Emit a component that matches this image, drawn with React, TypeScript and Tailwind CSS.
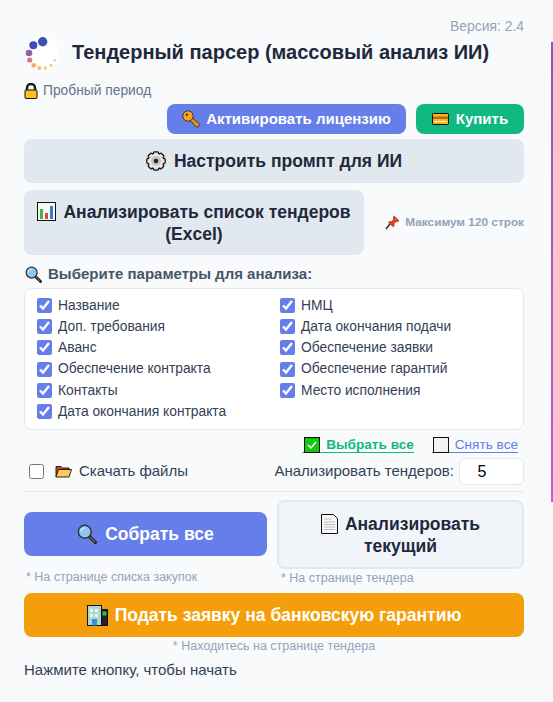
const leftParams = ['Название', 'Доп. требования', 'Аванс', 'Обеспечение контракта', 'Контакты', 'Дата окончания контракта']
const rightParams = ['НМЦ', 'Дата окончания подачи', 'Обеспечение заявки', 'Обеспечение гарантий', 'Место исполнения']

function Logo() {
  const dots = [
    [42.7, 11.7, 4.7, '#3d4fb5'],
    [33.3, 15.3, 4, '#3d4fb5'],
    [29, 23, 3.3, '#8b62b0'],
    [29.7, 30, 2.6, '#e8708a'],
    [33.7, 35.3, 2.4, '#fba66f'],
    [39.3, 38, 2, '#fdbb6e'],
    [45.3, 38, 1.8, '#fdc47a'],
    [51, 35.3, 1.5, '#fdc47a'],
    [54.7, 30.3, 1.3, '#fdc47a'],
  ] as const
  return (
    <svg width="34" height="34" viewBox="25 6 34 34" className="shrink-0">
      <circle cx="42" cy="23" r="17" fill="#ffffff" />
      {dots.map(([x, y, r, c]) => (
        <circle key={x + '-' + y} cx={x} cy={y} r={r} fill={c} />
      ))}
    </svg>
  )
}

function LockIcon() {
  return (
    <svg width="14" height="16" viewBox="0 0 14 16" className="shrink-0">
      <path d="M3 8V5a4 4 0 0 1 8 0v3" fill="none" stroke="#111" strokeWidth="2.4" />
      <path d="M4 8V5a3 3 0 0 1 6 0v3" fill="none" stroke="#8a8a8a" strokeWidth="0.7" />
      <rect x="1" y="7" width="12" height="8.5" rx="1" fill="#fcc21b" stroke="#111" strokeWidth="1" />
    </svg>
  )
}

function KeyIcon() {
  return (
    <svg width="18" height="18" viewBox="0 0 18 18" className="shrink-0">
      <path d="M7 9.500l2.500-2.500 8 7.500-1 2.500-1.800-.2-1-1.300-1 .6-1.200-1.200.4-1.200z" fill="#f29a02" stroke="#3a2a08" strokeWidth="0.800" />
      <circle cx="6" cy="6" r="5.200" fill="#f5a623" stroke="#3a2a08" strokeWidth="0.900" />
      <circle cx="4.800" cy="4.800" r="1.300" fill="#5f3b05" />
    </svg>
  )
}

function CardIcon() {
  return (
    <svg width="17" height="12" viewBox="0 0 17 12" className="shrink-0">
      <rect x="0.500" y="0.500" width="16" height="11" rx="0.800" fill="#f7b52c" stroke="#111" />
      <rect x="1" y="3.500" width="15" height="2.500" fill="#b56a0c" />
      <rect x="2.500" y="8" width="12" height="1" fill="#fff1b8" />
    </svg>
  )
}

function GearIcon() {
  const teeth = [0, 45, 90, 135]
  return (
    <svg width="20" height="20" viewBox="0 0 20 20" className="shrink-0">
      {teeth.map((a) => (
        <rect key={a} x="7.400" y="0.800" width="5.200" height="18.400" rx="1.200" fill="#d9d9d9" stroke="#111" strokeWidth="1.200" transform={`rotate(${a} 10 10)`} />
      ))}
      <circle cx="10" cy="10" r="7.300" fill="#e8e8e8" />
      <circle cx="10" cy="10" r="5" fill="#c4c4c4" />
      <circle cx="10" cy="10" r="2.300" fill="#222" />
    </svg>
  )
}

function ChartIcon() {
  return (
    <svg width="19" height="19" viewBox="0 0 19 19" className="shrink-0">
      <rect x="0.500" y="0.500" width="18" height="18" fill="#f7f7f7" stroke="#111" />
      <rect x="3" y="7" width="3" height="10" fill="#3fb54a" />
      <rect x="8" y="11" width="3" height="6" fill="#e8432e" />
      <rect x="13" y="4" width="3" height="13" fill="#2f7fd6" />
    </svg>
  )
}

function PinIcon() {
  return (
    <svg width="15" height="15" viewBox="0 0 15 15" className="shrink-0">
      <path d="M1 14l4-5" stroke="#333" strokeWidth="1.600" />
      <path d="M9 .8l5 5-1.500 1-1-.5-2.500 2.500c.4 1.400 0 2.400-.8 3L3.300 7.500c.7-.9 1.800-1.200 3-.8l2.500-2.500-.6-1.200z" fill="#e8401c" stroke="#7a1a08" strokeWidth="0.500" />
    </svg>
  )
}

function SearchIcon({ size }: { size: number }) {
  return (
    <svg width={size} height={size} viewBox="0 0 18 18" className="shrink-0">
      <path d="M11 11l5.500 5.500" stroke="#222" strokeWidth="3" strokeLinecap="round" />
      <path d="M11.500 11.500l4.500 4.500" stroke="#777" strokeWidth="1" strokeLinecap="round" />
      <circle cx="7" cy="7" r="5.800" fill="#8ec7f0" stroke="#333" strokeWidth="1.300" />
      <path d="M3.500 7a3.500 3.500 0 0 1 3.500-3.500" fill="none" stroke="#d8eefb" strokeWidth="1.200" />
    </svg>
  )
}

function FolderIcon() {
  return (
    <svg width="17" height="13" viewBox="0 0 17 13" className="shrink-0">
      <path d="M1 12V1.500h5L7.500 3H14v2" fill="#d9421c" stroke="#111" strokeWidth="0.900" />
      <path d="M1 12l2.500-7.500h13L14 12z" fill="#fbcb62" stroke="#111" strokeWidth="0.900" />
    </svg>
  )
}

function DocIcon() {
  return (
    <svg width="17" height="20" viewBox="0 0 17 20" className="shrink-0">
      <path d="M.5.500h12l4 4v15H.500z" fill="#f7f7f7" stroke="#111" />
      <path d="M3 5h8M3 8h11M3 10.500h11M3 13h11M3 15.500h11" stroke="#bdbdbd" />
    </svg>
  )
}

function BankIcon() {
  return (
    <svg width="21" height="21" viewBox="0 0 21 21" className="shrink-0">
      <rect x="0.500" y="0.500" width="14" height="20" fill="#a8d8d0" stroke="#111" />
      <rect x="14.500" y="4.500" width="6" height="16" fill="#222" stroke="#111" />
      <rect x="15.500" y="6.500" width="4" height="4" fill="#3fb54a" />
      <path d="M3 4h3v3H3zM8 4h3v3H8zM3 9h3v3H3zM8 9h3v3H8z" fill="#f5f5f5" />
      <rect x="5" y="14" width="5" height="6.500" fill="#3d8fd6" />
    </svg>
  )
}

function ParamItem({ label }: { label: string }) {
  return (
    <label className="flex items-center h-[21.2px] text-[13.8px] text-[#334155]">
      <input type="checkbox" defaultChecked className="w-[15px] h-[15px] m-0 mr-[6px] shrink-0 accent-[#667eea]" />
      <span className="mt-[1px]">{label}</span>
    </label>
  )
}

function ChartInline() {
  return (
    <span className="inline-block align-[-3px] mr-[7px]">
      <ChartIcon />
    </span>
  )
}

function DocInline() {
  return (
    <span className="inline-block align-[-4px] mr-[7px]">
      <DocIcon />
    </span>
  )
}

export default function App() {
  return (
    <div className="relative w-[553px] h-[702px] overflow-hidden bg-[#f8fafc] pl-6 pr-[29px] pt-[18px] text-[#1e293b] font-['Liberation_Sans',Arial,sans-serif]">
      <div className="absolute right-0 top-[42px] h-[460px] w-[2px] bg-linear-to-b from-[#8b55b8] to-[#b95fdc]" />

      <div className="text-right text-[13.900px] leading-[16px] text-[#94a3b8]">Версия: 2.4</div>

      <div className="flex items-center gap-[13px] mt-[2px] pl-px">
        <Logo />
        <h1 className="mb-[2px] text-[20px] leading-[24px] font-bold whitespace-nowrap">Тендерный парсер (массовый анализ ИИ)</h1>
      </div>

      <div className="flex items-center gap-[5px] mt-[13px] text-[13.800px] leading-[16px] text-[#64748b]">
        <LockIcon />
        Пробный период
      </div>

      <div className="flex justify-end gap-[10px] mt-[5px]">
        <button className="flex items-center justify-center gap-[6px] w-[239px] h-[30px] rounded-lg bg-[#667eea] text-white text-[15px] font-bold">
          <KeyIcon />
          Активировать лицензию
        </button>
        <button className="flex items-center justify-center gap-[7px] w-[108px] h-[30px] rounded-lg bg-[#10b981] text-white text-[15px] font-bold">
          <CardIcon />
          Купить
        </button>
      </div>

      <button className="flex items-center justify-center gap-[8px] w-full h-[44px] mt-[5px] rounded-lg bg-[#e2e8f0] text-[17.5px] font-bold">
        <GearIcon />
        Настроить промпт для ИИ
      </button>

      <div className="flex items-center mt-[7px]">
        <button className="w-[340px] h-[65px] rounded-lg bg-[#e2e8f0] text-[17.5px] leading-[22px] font-bold text-center">
          <ChartInline />
          Анализировать список тендеров
          <br />
          (Excel)
        </button>
        <div className="flex items-center gap-[5px] ml-auto text-[11.8px] font-bold text-[#94a3b8]">
          <PinIcon />
          Максимум 120 строк
        </div>
      </div>

      <div className="flex items-center gap-[6px] mt-[10px] pl-px text-[15px] leading-[18px] font-bold text-[#475569]">
        <SearchIcon size={17} />
        Выберите параметры для анализа:
      </div>

      <div className="grid grid-cols-2 mt-[5px] h-[142px] pl-[12px] pt-[6px] rounded-lg border border-[#e2e8f0] bg-white">
        <div>
          {leftParams.map((p) => (
            <ParamItem key={p} label={p} />
          ))}
        </div>
        <div>
          {rightParams.map((p) => (
            <ParamItem key={p} label={p} />
          ))}
        </div>
      </div>

      <div className="flex justify-end items-center gap-[18px] h-[18px] mt-[6px] pr-[6px] text-[13.6px]">
        <a className="flex items-center gap-[6px] h-[15px] mt-[1px] pl-[2px] border-b border-[#10b981] font-bold text-[#10b981]">
          <svg width="16" height="16" viewBox="0 0 16 16" className="shrink-0">
            <rect x="0.500" y="0.500" width="15" height="15" fill="#16c60c" stroke="#111" />
            <path d="M4 8l3 3 5-6" fill="none" stroke="#fff" strokeWidth="1.500" />
          </svg>
          Выбрать все
        </a>
        <a className="flex items-center gap-[6px] h-[15px] mt-[1px] pl-[1px] border-b border-[#667eea] text-[#667eea]">
          <svg width="16" height="16" viewBox="0 0 16 16" className="shrink-0">
            <rect x="0.500" y="0.500" width="15" height="15" fill="#f2f2f2" stroke="#111" />
          </svg>
          Снять все
        </a>
      </div>

      <div className="flex items-center h-[27px] mt-[4px] text-[15px] text-[#334155]">
        <input type="checkbox" className="w-[15px] h-[15px] ml-[5px] mr-[11px] accent-[#667eea]" />
        <FolderIcon />
        <span className="ml-[7px]">Скачать файлы</span>
        <span className="ml-auto mr-[5px]">Анализировать тендеров:</span>
        <input
          readOnly
          value="5"
          className="w-[65px] h-[27px] rounded-md border border-[#e2e8f0] bg-white text-center text-[16px] text-black pr-[19px]"
        />
      </div>

      <div className="h-px bg-[#e2e8f0] mt-[6px]" />

      <div className="flex gap-[10px] mt-[8px]">
        <div className="w-[243px] shrink-0">
          <button className="flex items-center justify-center gap-[8px] w-full h-[44px] mt-[12px] rounded-lg bg-[#667eea] text-white text-[17.5px] font-bold">
            <SearchIcon size={20} />
            Собрать все
          </button>
          <div className="mt-[13px] pl-[2px] text-[12.500px] leading-[16px] text-[#94a3b8]">* На странице списка закупок</div>
        </div>
        <div className="flex-1">
          <button className="w-full h-[69px] rounded-lg border-2 border-[#e2e8f0] bg-[#f1f5f9] text-[17.5px] leading-[22px] font-bold text-center">
            <DocInline />
            Анализировать
            <br />
            текущий
          </button>
          <div className="pl-[4px] text-[12.500px] leading-[16px] mt-[1px] text-[#94a3b8]">* На странице тендера</div>
        </div>
      </div>

      <button className="flex items-center justify-center gap-[7px] w-full h-[44px] mt-[7px] rounded-lg bg-[#f59e0b] text-white text-[17.5px] font-bold">
        <BankIcon />
        Подать заявку на банковскую гарантию
      </button>
      <div className="mt-[1px] text-center text-[12.500px] leading-[16px] text-[#94a3b8]">* Находитесь на странице тендера</div>

      <div className="mt-[6px] text-[15px] leading-[20px] text-[#334155]">Нажмите кнопку, чтобы начать</div>
    </div>
  )
}
